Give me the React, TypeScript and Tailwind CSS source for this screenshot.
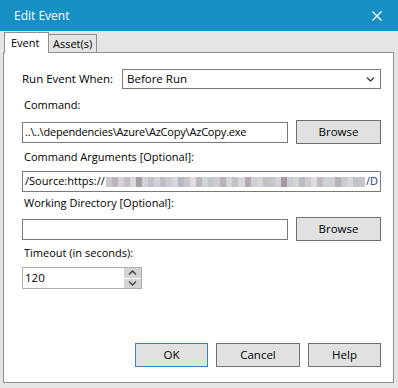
import React from "react";

const mosaic = [
  "#c9c9cf", "#b9b4bf", "#d6d3d8", "#c6bcc4", "#d9d9dc", "#a89aa6", "#cfd1d6", "#bcc3cc",
  "#d4d0d6", "#c2bcc8", "#cbcbd2", "#d8d6dc", "#b5b9c2", "#c9c6cc", "#dedede", "#bfb6bf",
  "#cfd4d8", "#c4c4cc", "#d2ccd2", "#b8b2ba", "#d0d6d4", "#c7c0c9", "#d6d6db", "#b6a7b1",
  "#cbd0d6", "#d8d4d7", "#bcc1c6", "#c9c4c6", "#d2d2d8", "#a798a4", "#c6cdd2", "#d4d4d4",
  "#b9bcc6", "#cfc9cf", "#dcdcdc", "#c1bac2", "#ccd2d6", "#d3cfd6", "#b7b0b7", "#c9c9d0",
  "#d7d7da", "#bfc4ca", "#cac4ca",
];

function Chevron({ up = false }: { up?: boolean }) {
  return (
    <svg width="9" height="6" viewBox="0 0 9 6" className={up ? "rotate-180" : ""}>
      <path d="M1 1.5 L4.5 5 L8 1.5" fill="none" stroke="#404040" strokeWidth="1.4" />
    </svg>
  );
}

function Label({ children }: { children: React.ReactNode }) {
  return <div className="h-[16px] leading-[16px] pl-[2px] text-black">{children}</div>;
}

function Button({ children, width, focused = false }: { children: React.ReactNode; width: string; focused?: boolean }) {
  return (
    <div
      className={`${width} h-[24px] flex items-center justify-center bg-[#e1e1e1] border ${
        focused ? "border-[#3c80b7]" : "border-[#707070]"
      } text-black text-[11.5px]`}
    >
      {children}
    </div>
  );
}

export default function App() {
  return (
    <div className="w-[398px] h-[388px] bg-[#e5e5e5] overflow-hidden font-['Open_Sans','Noto_Sans',sans-serif] text-[11px]">
      <div className="h-[31px] bg-[#1690c4] flex items-center justify-between pl-[14px] pr-[16px]">
        <span className="text-white text-[12px]">Edit Event</span>
        <svg width="10" height="10" viewBox="0 0 10 10">
          <path d="M0.5 0.5 L9.5 9.5 M9.5 0.5 L0.5 9.5" stroke="#fff" strokeWidth="1.3" />
        </svg>
      </div>

      <div className="h-[21px] flex items-end pl-[4px] relative z-10">
        <div className="w-[45px] h-[21px] bg-white border border-b-0 border-[#8e8f94] pl-[6px] pt-[2px] leading-[16px] text-black -mb-[1px]">
          Event
        </div>
        <div className="w-[48px] h-[18px] border border-b-0 border-l-0 border-[#8e8f94] pl-[4px] leading-[17px] text-black">
          Asset(s)
        </div>
      </div>

      <div className="ml-[3px] w-[391px] h-[331px] bg-white border border-[#8e8f94] pl-[18px] pr-[12px] pt-[16px]">
        <div className="h-[20px] flex items-center">
          <div className="w-[100px] text-black text-[11.5px]">Run Event When:</div>
          <div className="flex-1 h-[20px] border border-[#7a7a7a] flex items-center justify-between pl-[4px] pr-[5px] text-black text-[11.5px]">
            <span>Before Run</span>
            <Chevron />
          </div>
        </div>

        <div className="mt-[8px]">
          <Label>Command:</Label>
        </div>
        <div className="mt-[7px] h-[24px] flex items-center justify-between">
          <div className="w-[266px] h-[21px] border border-[#7a7a7a] flex items-center pl-[2px] text-black whitespace-nowrap overflow-hidden tracking-[-0.2px]">
            ..\..\dependencies\Azure\AzCopy\AzCopy.exe
          </div>
          <Button width="w-[85px]">Browse</Button>
        </div>

        <div className="mt-[5px]">
          <Label>Command Arguments [Optional]:</Label>
        </div>
        <div className="mt-[6px] h-[21px] border border-[#7a7a7a] flex items-center pl-[2px] pr-[2px] text-black whitespace-nowrap overflow-hidden">
          <span>/Source:https://</span>
          <div className="flex-1 h-[10px] flex mx-[1px]">
            {mosaic.map((c, i) => (
              <div key={i} className="flex-1 h-full" style={{ backgroundColor: c }} />
            ))}
          </div>
          <span className="text-[#1b3c8a]">/D</span>
        </div>

        <div className="mt-[3px]">
          <Label>Working Directory [Optional]:</Label>
        </div>
        <div className="mt-[6px] h-[24px] flex items-center justify-between">
          <div className="w-[266px] h-[21px] border border-[#7a7a7a]" />
          <Button width="w-[85px]">Browse</Button>
        </div>

        <div className="mt-[4px]">
          <Label>Timeout (in seconds):</Label>
        </div>
        <div className="mt-[6px] w-[120px] h-[22px] border border-[#adadad] flex">
          <div className="flex-1 flex items-center pl-[2px] text-black text-[11.5px]">120</div>
          <div className="w-[17px] flex flex-col gap-[1px] bg-white">
            <div className="flex-1 bg-[#d4d4d4] flex items-center justify-center">
              <Chevron up />
            </div>
            <div className="flex-1 bg-[#d4d4d4] flex items-center justify-center">
              <Chevron />
            </div>
          </div>
        </div>

        <div className="mt-[54px] flex justify-end gap-[8px]">
          <Button width="w-[73px]" focused>OK</Button>
          <Button width="w-[84px]">Cancel</Button>
          <Button width="w-[73px]">Help</Button>
        </div>
      </div>
    </div>
  );
}
